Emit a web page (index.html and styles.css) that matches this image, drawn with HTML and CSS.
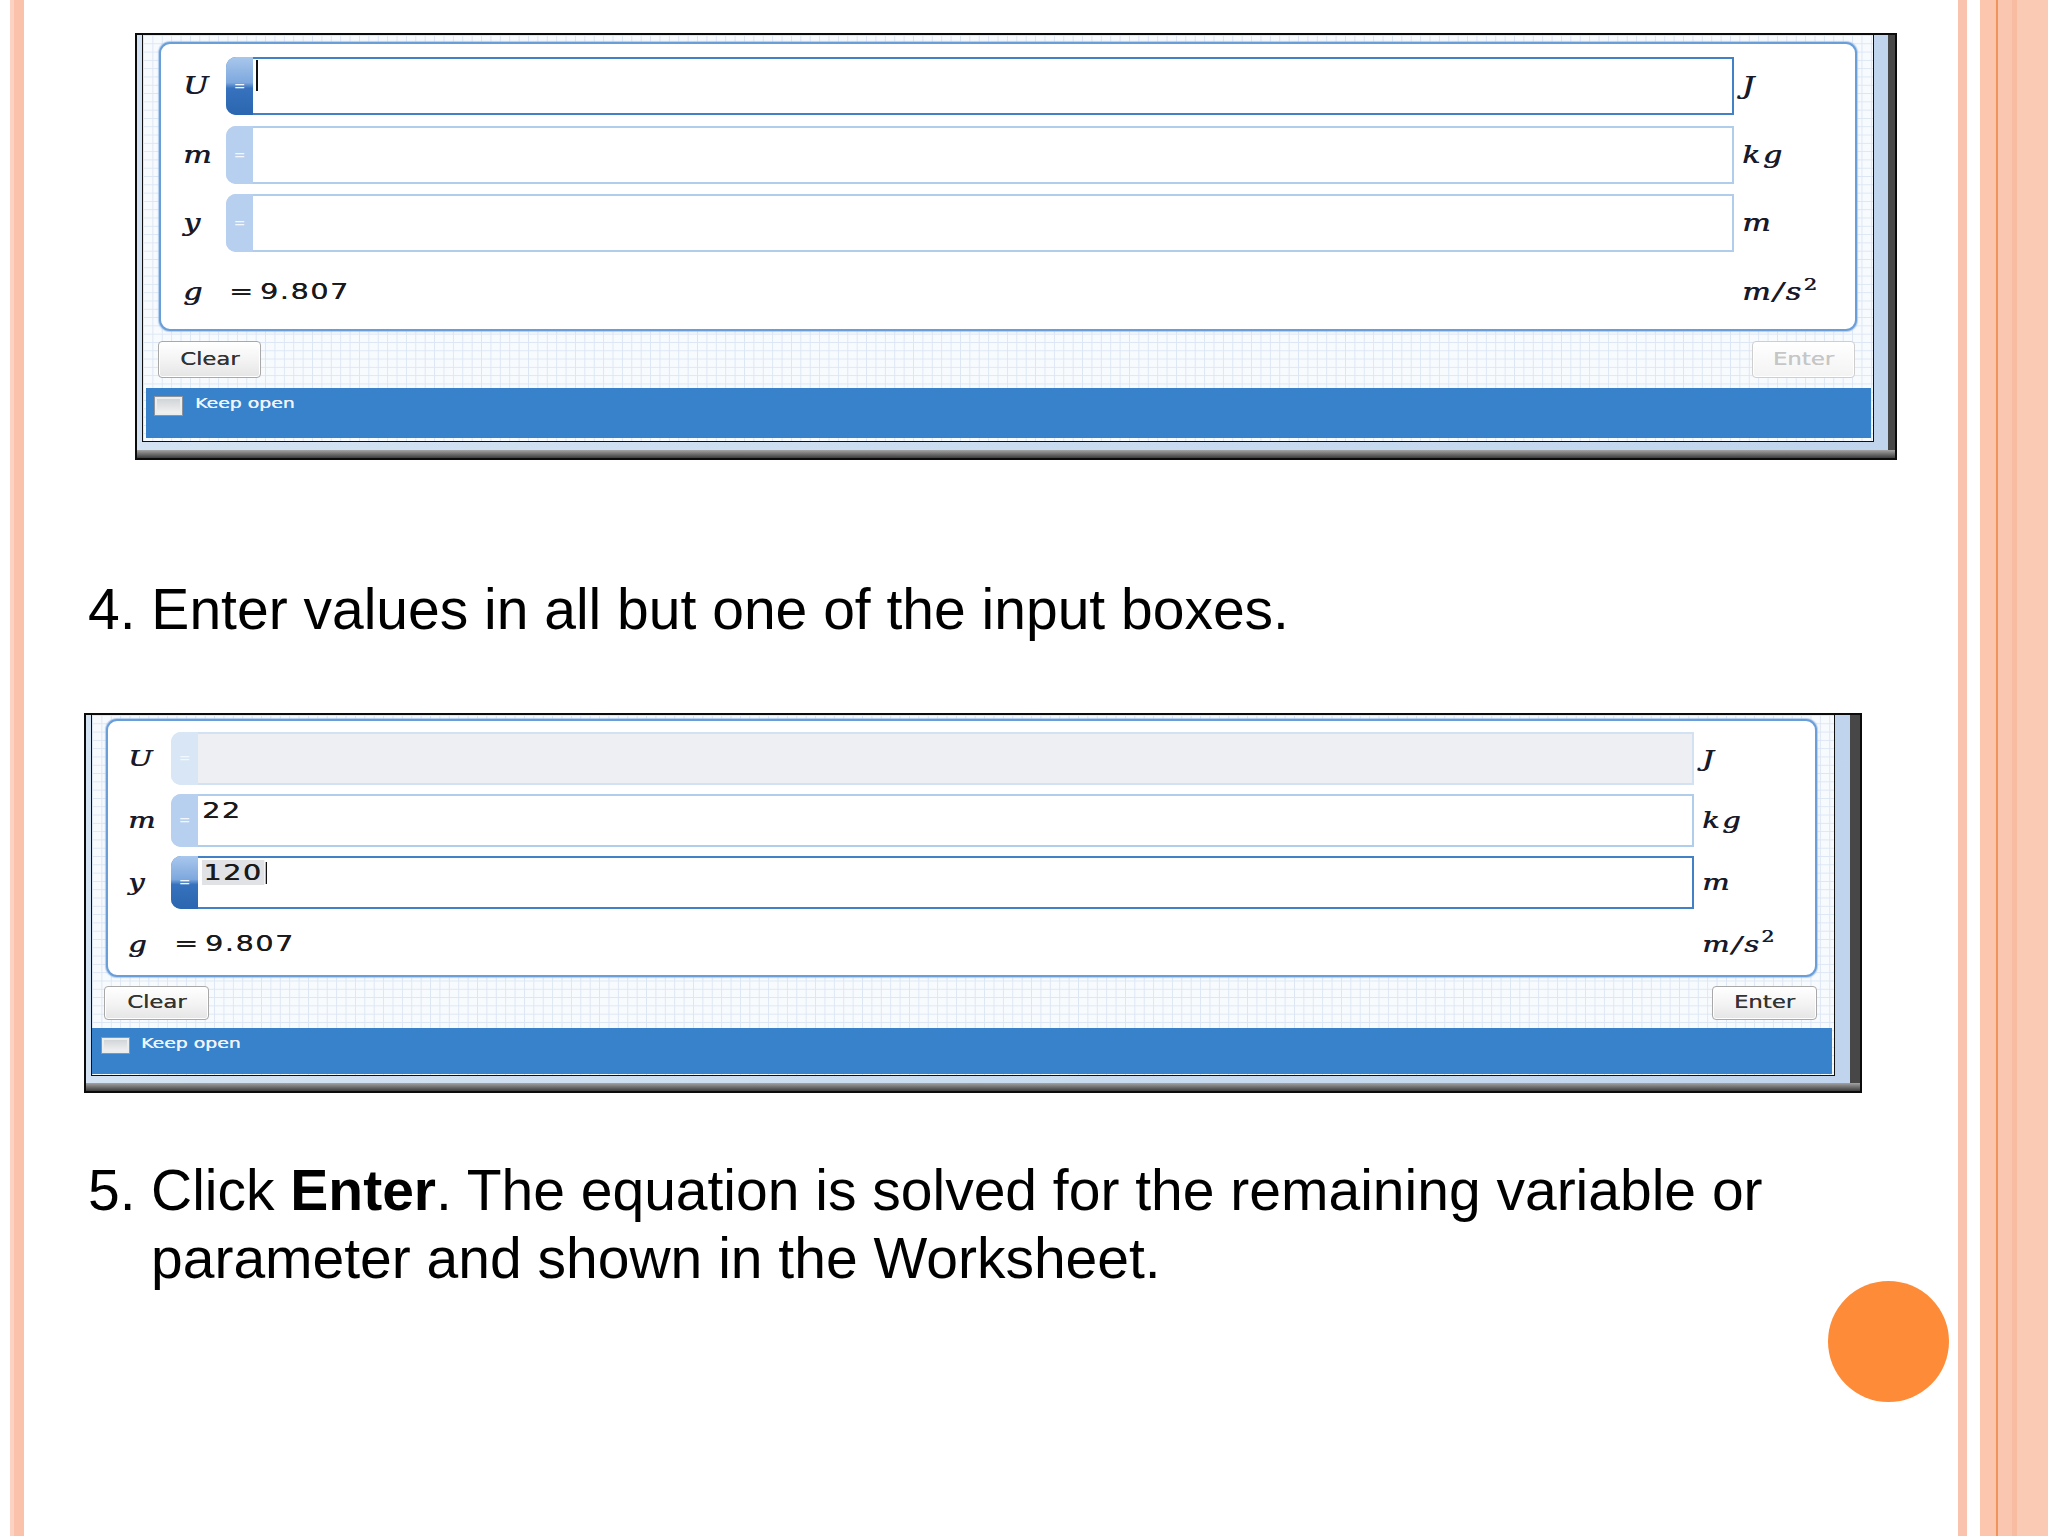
FILE: index.html
```html
<!DOCTYPE html>
<html lang="en">
<head>
<meta charset="utf-8">
<title>Solving an equation: entering values</title>
<link rel="stylesheet" href="styles.css">
</head>
<body>
<div class="slide">
  <main class="content">
    <div class="shot p1">
      <div class="frame">
        <div class="win">
          <div class="pane">
            <div class="gridarea">
              <div class="card">
                <span class="lbl"><i class="mi">U</i></span>
                <div class="field focus"><span class="tab">=</span><span class="val"><span class="caret c1"></span></span></div>
                <span class="unit"><i class="mi">J</i></span>

                <span class="lbl"><i class="mi">m</i></span>
                <div class="field"><span class="tab">=</span><span class="val"></span></div>
                <span class="unit"><i class="mi">kg</i></span>

                <span class="lbl"><i class="mi">y</i></span>
                <div class="field"><span class="tab">=</span><span class="val"></span></div>
                <span class="unit"><i class="mi">m</i></span>

                <span class="lbl"><i class="mi">g</i></span>
                <span class="const"><span class="num">= 9.807</span></span>
                <span class="unit"><i class="mi">m/s<sup>2</sup></i></span>
              </div>
              <div class="btns">
                <div class="btn"><span>Clear</span></div>
                <div class="btn dis"><span>Enter</span></div>
              </div>
            </div>
            <div class="bar"><span class="chk"></span><span class="keep">Keep open</span></div>
          </div>
        </div>
      </div>
    </div>

    <p class="step s4">4. Enter values in all but one of the input boxes.</p>

    <div class="shot p2">
      <div class="frame">
        <div class="win">
          <div class="pane">
            <div class="gridarea">
              <div class="card">
                <span class="lbl"><i class="mi">U</i></span>
                <div class="field off"><span class="tab">=</span><span class="val"></span></div>
                <span class="unit"><i class="mi">J</i></span>

                <span class="lbl"><i class="mi">m</i></span>
                <div class="field"><span class="tab">=</span><span class="val"><span class="num">22</span></span></div>
                <span class="unit"><i class="mi">kg</i></span>

                <span class="lbl"><i class="mi">y</i></span>
                <div class="field focus"><span class="tab">=</span><span class="val"><span class="num"><span class="sel">120</span><span class="caret c2"></span></span></span></div>
                <span class="unit"><i class="mi">m</i></span>

                <span class="lbl"><i class="mi">g</i></span>
                <span class="const"><span class="num">= 9.807</span></span>
                <span class="unit"><i class="mi">m/s<sup>2</sup></i></span>
              </div>
              <div class="btns">
                <div class="btn"><span>Clear</span></div>
                <div class="btn"><span>Enter</span></div>
              </div>
            </div>
            <div class="bar"><span class="chk"></span><span class="keep">Keep open</span></div>
          </div>
        </div>
      </div>
    </div>

    <div class="step s5">
      <span class="stepno">5.</span>
      <p class="steptext"><span class="ln">Click <b>Enter</b>. The equation is solved for the remaining variable or</span> <span class="ln">parameter and shown in the Worksheet.</span></p>
    </div>
  </main>
  <div class="dot"></div>
</div>
</body>
</html>
```

FILE: styles.css
```css
* { box-sizing: border-box; }
html, body { margin: 0; padding: 0; }
body { width: 2048px; height: 1536px; overflow: hidden; background: #fff; }

.slide {
  position: relative;
  width: 2048px;
  height: 1536px;
  overflow: hidden;
  font-family: "Liberation Sans", Arial, sans-serif;
  color: #000;
  background: linear-gradient(to right,
    #ffffff 0 10px,
    #fcd3c3 10px 14px,
    #fac2ab 14px 24px,
    #ffffff 24px 1958px,
    #fac3ad 1958px 1967px,
    #ffffff 1967px 1980px,
    #fbc5ae 1980px 1996px,
    #f1945c 1996px 1998px,
    #fbc6b0 1998px 2012px,
    #f8bca3 2012px 2017px,
    #fbcab5 2017px 2048px);
}

.content { padding-top: 33px; }

/* ---------- dialog screenshots ---------- */
.p1 {
  width: 1762px;
  margin-left: 135px;
  --dark-r: 7px; --dark-b: 8px;
  --light-l: 5px; --light-r: 14px; --light-b: 8px;
}
.p2 {
  width: 1778px;
  margin-left: 84px;
  margin-top: 70px;
  --dark-r: 10px; --dark-b: 8px;
  --light-l: 5px; --light-r: 15px; --light-b: 7px;
}

.frame {
  border: 2px solid #0b0b0b;
  padding: 0 var(--dark-r) var(--dark-b) 0;
  background: linear-gradient(to bottom,
    #474747 0, #474747 calc(100% - var(--dark-b)),
    #a4a4a4 calc(100% - var(--dark-b)), #3c3c3c 100%);
}
.win {
  padding: 0 var(--light-r) var(--light-b) var(--light-l);
  background: linear-gradient(to right, #d4e3f3, #c0d5ed);
}
.pane {
  border: 1px solid #101010;
  border-top: 0;
  background-color: #f8fbfe;
  background-image:
    linear-gradient(to right, #dce6f4 1px, transparent 1px),
    linear-gradient(to bottom, #dce6f4 1px, transparent 1px);
  background-size: 9.4px 8.3px;
}
.p1 .pane { padding-bottom: 3px; }
.p2 .pane { padding-bottom: 1px; }

.p1 .gridarea { padding: 7px 0 10px; }
.p2 .gridarea { padding: 4px 0 8px; }

/* rounded white card */
.card {
  display: grid;
  background: #fff;
  border: 2px solid #6a9ed8;
  border-radius: 11px;
  box-shadow: 0 0 0 1px rgba(165, 198, 236, 0.7), 0 0 3px rgba(90, 140, 205, 0.35);
}
.p1 .card {
  margin: 0 16px;
  height: 289px;
  padding: 13px 0 0 22px;
  grid-template-columns: 43px 1508px 1fr;
  grid-auto-rows: 58px;
  row-gap: 10.5px;
}
.p2 .card {
  margin: 0 17px 0 14px;
  height: 258px;
  padding: 11px 0 0 20px;
  grid-template-columns: 43px 1523px 1fr;
  grid-auto-rows: 52.5px;
  row-gap: 9.5px;
}

.lbl, .unit, .const { display: flex; align-items: center; }
.unit { padding-left: 8px; }
.const { padding-left: 3px; }

.mi {
  display: inline-block;
  font-family: "DejaVu Serif", "Liberation Serif", serif;
  font-style: italic;
  font-size: 24px;
  line-height: 1;
  color: #181a2a;
  text-shadow: 0.6px 0 0 #181a2a;
  transform: scaleX(1.25);
  transform-origin: 0 50%;
}
.p2 .mi { font-size: 23px; }
.unit .mi { letter-spacing: 2px; }
.mi sup {
  font-style: normal;
  font-size: 0.7em;
  line-height: 0;
  vertical-align: 0.6em;
  margin-left: 0;
}

/* input fields */
.field {
  display: flex;
  border: 2px solid #b1cdec;
  border-radius: 10px 0 0 10px;
  background: #fff;
}
.field .tab {
  flex: none;
  width: 27px;
  margin: -2px 0 -2px -2px;
  border-radius: 10px 0 0 10px;
  background: #b8d0ef;
  color: #f2f7fd;
  font: 14px/1 "DejaVu Sans", sans-serif;
  display: flex;
  align-items: center;
  justify-content: center;
}
.field.focus { border-color: #4281c6; }
.field.focus .tab {
  background: linear-gradient(to bottom, #a9c7ec 0%, #7ea8de 44%, #3672bd 54%, #2b66b0 100%);
}
.field.off { border-color: #d3e2f3; background: #eeeff2; }
.field.off .tab { background: #d8e6f6; }

.val {
  flex: 1;
  padding: 4px 0 0 4px;
  font: 22px/22px "DejaVu Sans", sans-serif;
  color: #1e1e1e;
}
.num {
  display: inline-block;
  font: 22px/22px "DejaVu Sans", sans-serif;
  color: #1a1a1a;
  text-shadow: 0.3px 0 0 #1a1a1a;
  letter-spacing: 1.2px;
  word-spacing: -4px;
  transform: scaleX(1.3);
  transform-origin: 0 50%;
  white-space: nowrap;
}
.sel { background: #e0e2e6; padding: 0 1px; }
.caret {
  display: inline-block;
  vertical-align: top;
  background: #111;
}
.caret.c1 { width: 2px; height: 31px; margin: -3px 0 0 -1px; }
.caret.c2 { width: 1.6px; height: 22px; margin-left: 1px; }

/* buttons */
.btns {
  display: flex;
  justify-content: space-between;
}
.p1 .btns { margin-top: 10px; padding: 0 18px 0 15px; }
.p2 .btns { margin-top: 9px; padding: 0 17px 0 12px; }
.btn {
  display: flex;
  align-items: center;
  justify-content: center;
  border: 1px solid #a8a8a8;
  border-radius: 4px;
  background: linear-gradient(to bottom, #ffffff 0%, #f4f4f4 50%, #e5e5e5 100%);
  box-shadow: inset 0 0 0 1px #ffffff;
  font: 17.5px/1 "DejaVu Sans", sans-serif;
  color: #333;
}
.btn span { display: inline-block; transform: scaleX(1.3); text-shadow: 0.2px 0 0 currentColor; }
.p1 .btn { width: 103px; height: 37px; }
.p2 .btn { width: 105px; height: 34px; }
.btn.dis { border-color: #cecece; color: #c6c6c6; background: linear-gradient(to bottom, #ffffff, #f3f3f3); }

/* blue bottom bar */
.bar {
  display: flex;
  align-items: flex-start;
  background: #3882cc;
}
.p1 .bar { height: 50px; margin: 0 2px 0 3px; }
.p2 .bar { height: 46px; margin: 0 2px 0 0; }
.chk {
  flex: none;
  width: 29px;
  border: 1px solid #8f949c;
  box-shadow: inset 0 0 0 2px #eceded;
  background: linear-gradient(to bottom, #cdd0d4, #f5f5f5);
}
.p1 .chk { height: 20px; margin: 8px 0 0 8px; }
.p2 .chk { height: 17px; margin: 9px 0 0 9px; }
.keep {
  display: inline-block;
  font: 14.5px/14px "DejaVu Sans", sans-serif;
  color: #eef4fb;
  text-shadow: 0.3px 0 0 #eef4fb;
  transform: scaleX(1.3);
  transform-origin: 0 50%;
  margin-top: 8px;
}
.p1 .keep { margin-left: 12px; }
.p2 .keep { margin-left: 11px; }

/* slide text */
.step {
  margin: 0 0 0 88px;
  width: 1762px;
  font-size: 57px;
  line-height: 68px;
  color: #000;
}
.s4 { margin-top: 115px; }
.s5 { margin-top: 63px; display: flex; align-items: flex-start; }
.stepno { flex: none; width: 63px; }
.steptext { margin: 0; flex: 1; }
.ln { display: block; white-space: nowrap; }

.dot {
  position: absolute;
  left: 1828px;
  top: 1281px;
  width: 121px;
  height: 121px;
  border-radius: 50%;
  background: #fd8b37;
}
```
